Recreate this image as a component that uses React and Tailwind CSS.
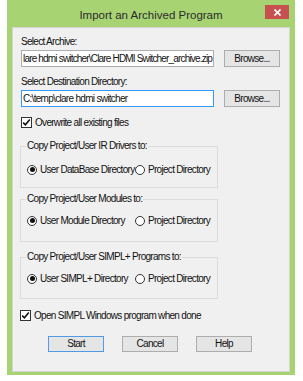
import React from 'react';

const font = "font-['Liberation_Sans',sans-serif] text-[10px] tracking-[-0.7px]";

const CheckBox = ({ label }) => (
  <div className="flex items-center h-[13px]">
    <div className="w-[11px] h-[11px] border border-[#333] bg-white flex items-center justify-center">
      <svg width="9" height="9" viewBox="0 0 9 9">
        <path d="M1.2 4.6 L3.4 6.8 L7.8 1.6" fill="none" stroke="#111" strokeWidth="1.6" />
      </svg>
    </div>
    <span className="ml-[3px] leading-[13px]">{label}</span>
  </div>
);

const Radio = ({ label, checked }) => (
  <div className="flex items-center h-[13px]">
    <div className="w-[10px] h-[10px] rounded-full border border-[#333] bg-white flex items-center justify-center">
      {checked && <div className="w-[5px] h-[5px] rounded-full bg-[#111]" />}
    </div>
    <span className="ml-[3px] leading-[13px] whitespace-nowrap">{label}</span>
  </div>
);

const Group = ({ title, first, second, className, rowClass }) => (
  <fieldset className={`ml-[7px] w-[198px] border border-[#dcdcdc] pl-[6px] ${className}`}>
    <legend className="px-[1px] -ml-[1px] leading-[12px]">{title}</legend>
    {/* options */}
    <div className={`flex items-center ${rowClass}`}>
      <div className="w-[108px]">
        <Radio label={first} checked />
      </div>
      <Radio label={second} />
    </div>
  </fieldset>
);

const Button = ({ children, primary }) => (
  <div
    className={`w-[56px] h-[16px] flex items-center justify-center leading-[12px] bg-[#e5e5e5] border ${
      primary ? 'border-[#4f9be6]' : 'border-[#adadad]'
    }`}
  >
    {children}
  </div>
);

const Browse = () => (
  <div className="ml-[10px] w-[56px] h-[17px] flex items-center justify-center bg-[#e5e5e5] border border-[#adadad] leading-[12px]">
    Browse...
  </div>
);

export default function App() {
  return (
    <div className="w-[303px] h-[381px] bg-white">
      <div className="ml-[7px] w-[288px] h-[375px] bg-[#a8d373] flex flex-col">
        <div className="relative h-[27px] flex items-center justify-center pt-[4px]">
          <span className="font-['Liberation_Sans',sans-serif] text-[11.5px] text-[#2b2b2b]">
            Import an Archived Program
          </span>
          <div className="absolute right-[6px] top-[5px] w-[24px] h-[14px] bg-[#c75050] flex items-center justify-center">
            <svg width="7" height="7" viewBox="0 0 7 7">
              <path d="M0.5 0.5 L6.5 6.5 M6.5 0.5 L0.5 6.5" stroke="#fff" strokeWidth="1.6" />
            </svg>
          </div>
        </div>

        <div className={`mx-[5px] w-[278px] h-[345px] bg-[#f0f0f0] border border-[#d4d4d4] text-[#111] ${font}`}>
          <div className="ml-[8px] mt-[8px] leading-[12px]">Select Archive:</div>
          <div className="ml-[8px] mt-[2px] flex items-center">
            <div className="w-[193px] h-[17px] bg-white border border-[#abadb3] overflow-hidden whitespace-nowrap pl-[1px] leading-[15px] tracking-[-0.82px]">
              lare hdmi switcher\Clare HDMI Switcher_archive.zip
            </div>
            <Browse />
          </div>

          <div className="ml-[8px] mt-[9px] leading-[12px]">Select Destination Directory:</div>
          <div className="ml-[8px] mt-[2px] flex items-center">
            <div className="w-[193px] h-[17px] bg-white border border-[#3399ff] overflow-hidden whitespace-nowrap pl-[1px] leading-[15px]">
              C:\temp\clare hdmi switcher
            </div>
            <Browse />
          </div>

          <div className="ml-[8px] mt-[9px]">
            <CheckBox label="Overwrite all existing files" />
          </div>

          <Group
            className="mt-[11px] pb-[11px]"
            rowClass="mt-[11px]"
            title="Copy Project/User IR Drivers to:"
            first="User DataBase Directory"
            second="Project Directory"
          />
          <Group
            className="mt-[5px] pb-[14px]"
            rowClass="mt-[9px]"
            title="Copy Project/User Modules to:"
            first="User Module Directory"
            second="Project Directory"
          />
          <Group
            className="mt-[9px] pb-[13px]"
            rowClass="mt-[9px]"
            title="Copy Project/User SIMPL+ Programs to:"
            first="User SIMPL+ Directory"
            second="Project Directory"
          />

          <div className="ml-[7px] mt-[10px]">
            <CheckBox label="Open SIMPL Windows program when done" />
          </div>

          <div className="ml-[35px] mt-[14px] flex gap-[18px]">
            <Button primary>Start</Button>
            <Button>Cancel</Button>
            <Button>Help</Button>
          </div>
        </div>
      </div>
    </div>
  );
}
